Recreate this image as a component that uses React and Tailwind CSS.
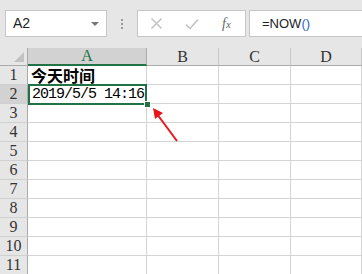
import React from 'react';

const COLS = ['A', 'B', 'C', 'D'];
const ROWS = [1, 2, 3, 4, 5, 6, 7, 8, 9, 10, 11];

const mono = { fontFamily: '"Liberation Mono", "Noto Sans CJK SC", monospace' };

// ── Formula bar ───────────────────────────────────────────────────────────────
const FormulaBar = () => (
  <div className="flex items-start h-[48px] pt-[10px] pl-[5px]">
    {/* Name box */}
    <div className="relative flex items-center w-[102px] h-[27px] bg-white border border-[#c6c6c6] pl-[7px] text-[14px] text-[#222] font-['Liberation_Sans',sans-serif]">
      A2
      <span className="absolute right-[7px] top-[11px] w-0 h-0 border-l-[4px] border-r-[4px] border-t-[4px] border-l-transparent border-r-transparent border-t-[#777]" />
    </div>

    {/* Dots */}
    <div className="flex flex-col gap-[2px] ml-[14px] mt-[9px]">
      <span className="w-[2px] h-[2px] bg-[#999]" />
      <span className="w-[2px] h-[2px] bg-[#999]" />
      <span className="w-[2px] h-[2px] bg-[#999]" />
    </div>

    {/* Buttons */}
    <div className="flex items-center w-[109px] h-[27px] ml-[14px] bg-white border border-[#c6c6c6]">
      <svg className="ml-[12px]" width="13" height="13" viewBox="0 0 13 13">
        <path d="M1.5 1.5 L11.5 11.5 M11.5 1.5 L1.5 11.5" stroke="#c4c4c4" strokeWidth="1.6" />
      </svg>
      <svg className="ml-[22px]" width="14" height="12" viewBox="0 0 14 12">
        <path d="M1 6.5 L5 10.5 L13 1.5" fill="none" stroke="#c4c4c4" strokeWidth="1.6" />
      </svg>
      <span className="ml-[23px] text-[14px] italic text-[#666] font-['Liberation_Serif',serif] leading-none">
        f<span className="text-[11px]">x</span>
      </span>
    </div>

    {/* Formula input */}
    <div className="flex items-center flex-1 h-[27px] ml-[3px] bg-white border border-r-0 border-[#c6c6c6] pl-[12px] text-[13px] text-[#222] font-['Liberation_Sans',sans-serif]">
      =NOW<span className="text-[#1f5fd0]">()</span>
    </div>
  </div>
);

// ── Sheet grid ────────────────────────────────────────────────────────────────
const Sheet = () => (
  <div className="relative grid grid-cols-[28px_119px_72px_72px_1fr] grid-rows-[18px_repeat(11,19px)] bg-white" style={mono}>
    {/* Corner */}
    <div className="relative bg-[#e6e6e6] border-r border-b border-[#ababab]">
      <span className="absolute right-[3px] bottom-[3px] w-0 h-0" style={{ borderBottom: '10px solid #c2c2c2', borderLeft: '10px solid transparent' }} />
    </div>

    {COLS.map((c) => (
      <div
        key={c}
        className={`flex items-center justify-center text-[16px] leading-none font-['Liberation_Serif',serif] ${
          c === 'A'
            ? 'bg-[#d2d2d2] text-[#217346] border-b-2 border-[#217346] border-r border-r-[#ababab]'
            : 'bg-[#e6e6e6] text-[#333] border-b border-[#ababab] border-r border-r-[#c8c8c8]'
        }`}
      >
        {c}
      </div>
    ))}

    {ROWS.map((r) => (
      <React.Fragment key={r}>
        <div
          className={`flex items-center justify-center text-[16px] leading-none text-[#333] font-['Liberation_Serif',serif] border-r border-[#ababab] border-b border-b-[#d0d0d0] ${
            r === 2 ? 'bg-[#d2d2d2]' : 'bg-[#e6e6e6]'
          }`}
        >
          {r}
        </div>
        {COLS.map((c) => (
          <div key={c} className="flex items-center border-r border-b border-[#d4d4d4] overflow-visible whitespace-nowrap">
            {r === 1 && c === 'A' && (
              <span className="pl-[3px] text-[16px] font-bold text-black font-['Noto_Sans_CJK_SC',sans-serif] leading-none">今天时间</span>
            )}
            {r === 2 && c === 'A' && (
              <span className="pl-[4px] text-[15px] tracking-[-1px] text-black leading-none">2019/5/5 14:16</span>
            )}
          </div>
        ))}
      </React.Fragment>
    ))}

    {/* Selection A2 */}
    <div className="absolute left-[28px] top-[36px] w-[119px] h-[21px] border-2 border-[#217346] pointer-events-none" />
    <div className="absolute left-[145px] top-[54px] w-[5px] h-[5px] bg-[#217346] border border-white box-content -translate-x-[1px] -translate-y-[1px]" />

    {/* Annotation arrow */}
    <svg className="absolute left-[150px] top-[56px]" width="32" height="42" viewBox="0 0 32 42">
      <path d="M27 37 L7 10" stroke="#e8161b" strokeWidth="2" />
      <path d="M3 4 L13 9 L5 15 Z" fill="#e8161b" />
    </svg>
  </div>
);

export default function App() {
  return (
    <div className="w-[362px] h-[274px] overflow-hidden bg-[#e6e6e6]">
      <FormulaBar />
      <Sheet />
    </div>
  );
}
